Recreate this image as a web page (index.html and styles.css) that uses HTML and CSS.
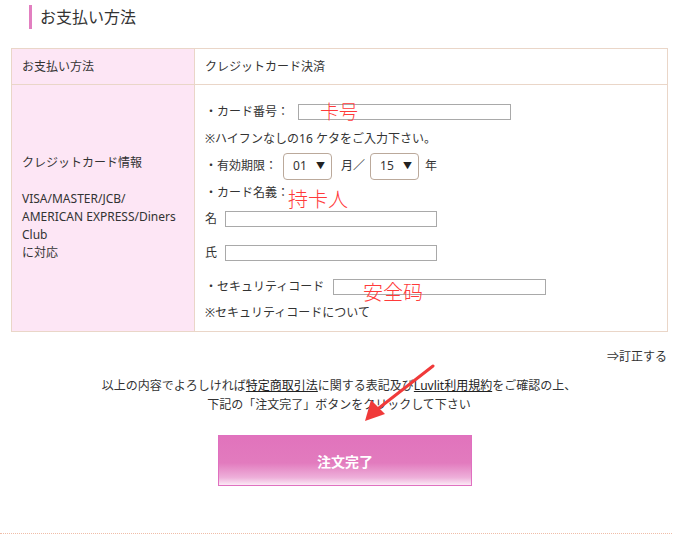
FILE: index.html
```html
<!DOCTYPE html>
<html lang="ja">
<head>
<meta charset="utf-8">
<link rel="stylesheet" href="styles.css">
</head>
<body>
<div class="page">
  <h2 class="heading">お支払い方法</h2>
  <table class="pay">
    <tr class="r1">
      <th>お支払い方法</th>
      <td>クレジットカード決済</td>
    </tr>
    <tr class="r2">
      <th>クレジットカード情報<br><br><span class="nw">VISA/MASTER/JCB/</span><br><span class="nw">AMERICAN EXPRESS/Diners</span><br>Club<br>に対応</th>
      <td class="form">
        <div class="row">・カード番号：<span class="inp w213 ml9"></span><span class="note n1">卡号</span></div>
        <div class="row h27">※ハイフンなしの16 ケタをご入力下さい。</div>
        <div class="row h28">・有効期限：<span class="sel ml6"><span>01</span><span class="tri">▼</span></span><span class="ml9">月／</span><span class="sel ml5"><span>15</span><span class="tri">▼</span></span><span class="ml6">年</span></div>
        <div class="row">・カード名義：<span class="note n2">持卡人</span></div>
        <div class="row">名<span class="inp w212 ml8"></span></div>
        <div class="row mt8">氏<span class="inp w212 ml8"></span></div>
        <div class="row mt8">・セキュリティコード<span class="inp w213 ml9"></span><span class="note n3">安全码</span></div>
        <div class="row">※セキュリティコードについて</div>
      </td>
    </tr>
  </table>
  <div class="fix">⇒訂正する</div>
  <p class="confirm">以上の内容でよろしければ<a>特定商取引法</a>に関する表記及び<a>Luvlit利用規約</a>をご確認の上、<br>下記の「注文完了」ボタンをクリックして下さい</p>
  <div class="btnwrap"><button class="btn">注文完了</button></div>
  <div class="dots"></div>
  <svg class="arrow" width="80" height="70" viewBox="0 0 80 70">
    <line x1="76" y1="2" x2="22" y2="44" stroke="#f03a3a" stroke-width="3" stroke-linecap="round"/>
    <polygon points="8,57 14,36 28,50" fill="#f03a3a"/>
  </svg>
</div>
</body>
</html>
```
FILE: styles.css
```css
html, body {
  margin: 0;
  padding: 0;
  background: #fff;
}
body {
  font-family: "Noto Sans", "Noto Sans CJK JP", sans-serif;
  font-size: 12px;
  color: #333;
}
.page {
  position: relative;
  width: 676px;
  height: 540px;
  overflow: hidden;
}
.heading {
  margin: 5px 0 0 29px;
  height: 24px;
  border-left: 3px solid #e27fc0;
  padding-left: 8px;
  font-size: 16px;
  font-weight: normal;
  line-height: 24px;
  color: #333;
}
.pay {
  margin: 19px 0 0 11px;
  width: 657px;
  border-collapse: collapse;
}
.pay th, .pay td {
  border: 1px solid #ead6c8;
  text-align: left;
  font-weight: normal;
  padding: 0 10px;
  line-height: 18px;
}
.pay th {
  width: 162px;
  background: #fde6f5;
}
.r1 th, .r1 td { height: 35px; }
.r2 th { vertical-align: middle; }
.nw { white-space: nowrap; }
.form {
  vertical-align: top;
  padding-top: 14px !important;
  padding-bottom: 5px !important;
  position: relative;
}
.row {
  position: relative;
  display: flex;
  align-items: center;
  height: 26px;
  white-space: nowrap;
}
.h27 { height: 27px; }
.h28 { height: 28px; }
.mt8 { margin-top: 8px; }
.inp {
  display: inline-block;
  height: 14px;
  border: 1px solid #a9a9a9;
  background: #fff;
}
.w213 { width: 211px; }
.w212 { width: 210px; }
.ml9 { margin-left: 9px; }
.ml8 { margin-left: 8px; }
.ml6 { margin-left: 6px; }
.ml5 { margin-left: 5px; }
.sel {
  display: inline-flex;
  align-items: center;
  justify-content: space-between;
  box-sizing: border-box;
  width: 49px;
  height: 27px;
  border: 1px solid #bba99b;
  border-radius: 4px;
  padding: 0 6px 0 9px;
  font-size: 12px;
}
.tri { font-size: 9px; color: #222; }
.note {
  position: absolute;
  color: #ff3a3a;
  font-family: "Noto Sans CJK SC", sans-serif;
  font-weight: 300;
  line-height: 1;
}
.n1 { left: 115px; top: 2px; font-size: 19px; }
.n2 { left: 83px; top: 9px; font-size: 20px; }
.n3 { left: 158px; top: 8px; font-size: 20px; }
.fix {
  margin: 15px 9px 0 0;
  text-align: right;
  line-height: 20px;
}
.confirm {
  margin: 9px 0 0 11px;
  width: 656px;
  text-align: center;
  line-height: 19px;
}
.confirm a {
  color: #222;
  text-decoration: underline;
}
.btnwrap {
  display: flex;
  justify-content: center;
  margin-top: 21px;
  padding-left: 14px;
}
.btn {
  width: 254px;
  height: 51px;
  border: 1px solid #e070c0;
  background: linear-gradient(to bottom, #e173bc 0%, #e27bbe 55%, #eeb0da 85%, #fbeaf5 100%);
  color: #fff;
  font-family: "Noto Sans CJK JP", sans-serif;
  font-weight: bold;
  font-size: 14px;
  cursor: pointer;
}
.dots {
  margin-top: 47px;
  width: 672px;
  border-top: 1px dotted #f0bda8;
}
.arrow {
  position: absolute;
  left: 357px;
  top: 364px;
}
```
